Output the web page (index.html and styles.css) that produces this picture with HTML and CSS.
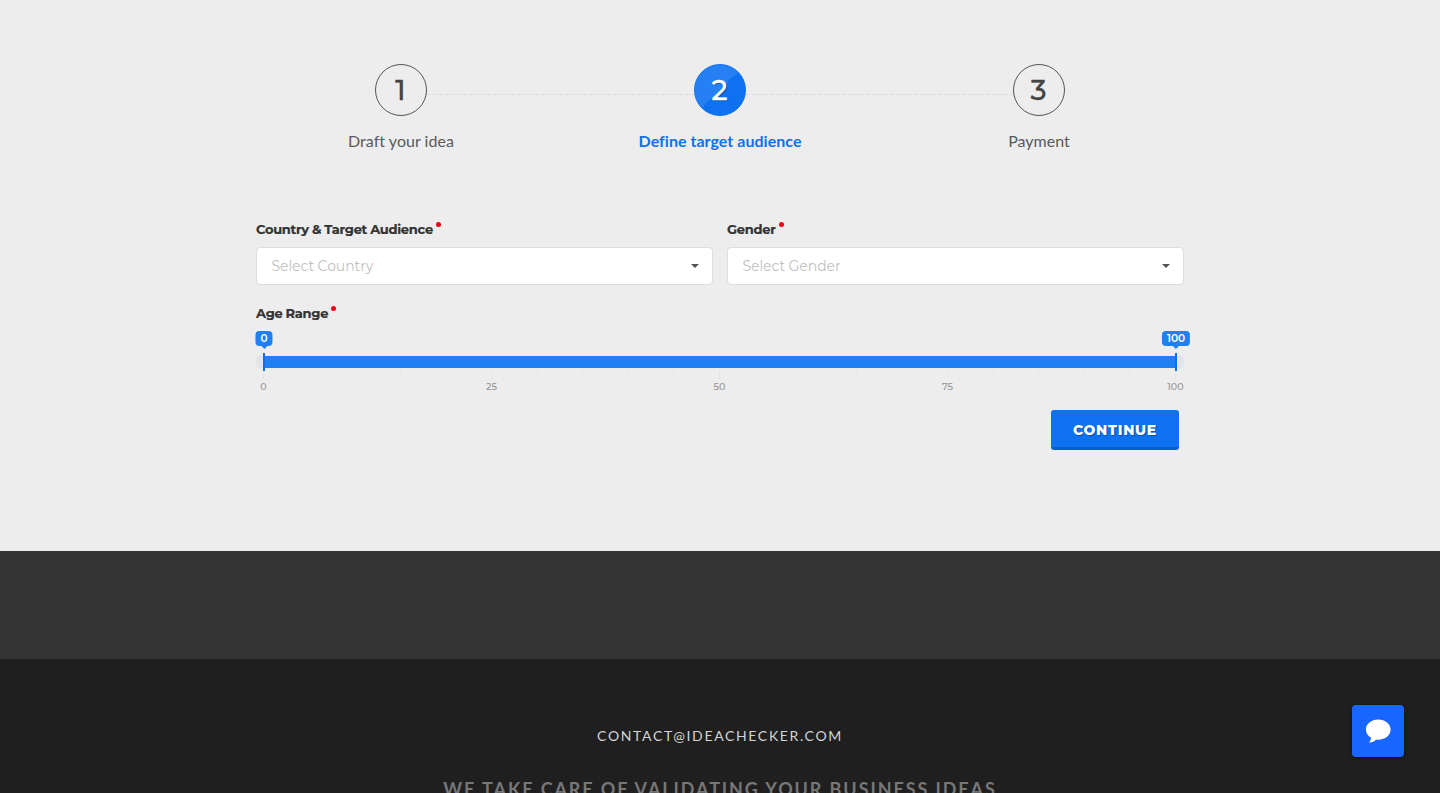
FILE: index.html
```html
<!DOCTYPE html>
<html lang="en">
<head>
  <meta charset="UTF-8" />
  <meta name="viewport" content="width=device-width, initial-scale=1.0"/>
  <title>Idea Checker - Define target audience</title>
  <link rel="stylesheet" href="styles.css">
</head>
<body>

  <main>
    <ol class="steps">
      <li class="step">
        <span class="circle">1</span>
        <span class="step-name">Draft your idea</span>
      </li>
      <li class="step active">
        <span class="circle">2</span>
        <span class="step-name">Define target audience</span>
      </li>
      <li class="step">
        <span class="circle">3</span>
        <span class="step-name">Payment</span>
      </li>
    </ol>

    <form class="audience">
      <div class="fields">
        <div class="field">
          <label class="label">Country &amp; Target Audience</label>
          <div class="dropdown">
            <span class="placeholder">Select Country</span>
            <i class="caret"></i>
          </div>
        </div>
        <div class="field">
          <label class="label">Gender</label>
          <div class="dropdown">
            <span class="placeholder">Select Gender</span>
            <i class="caret"></i>
          </div>
        </div>
      </div>

      <label class="label label-age">Age Range</label>
      <div class="range">
        <div class="bar">
          <div class="fill">
            <span class="handle from"><b class="tip">0</b></span>
            <span class="handle to"><b class="tip">100</b></span>
          </div>
        </div>
        <div class="grid" id="grid"></div>
      </div>

      <div class="actions">
        <button type="button" class="btn">CONTINUE</button>
      </div>
    </form>
  </main>

  <div class="band"></div>

  <footer>
    <a class="mail">CONTACT@IDEACHECKER.COM</a>
    <p class="slogan">WE TAKE CARE OF VALIDATING YOUR BUSINESS IDEAS</p>
  </footer>

  <div class="chat">
    <svg width="26" height="24" viewBox="0 0 26 24">
      <path fill="#fff" d="M13.200 .6C6.300 .6 .900 5 .900 10.600c0 3.500 2 6.400 5.200 8.200-.1 1.900-.7 3.200-2.100 4.700 3 .1 5.500-.9 7-3 .8.1 1.500.2 2.200.2 7 0 12.400-4.500 12.400-10.100S20.200.6 13.200.6z"/>
    </svg>
  </div>

<script>
  // ticks every 5 years, a label on every 25
  const grid = document.getElementById("grid");
  for (let i = 0; i <= 100; i += 5) {
    const tick = document.createElement("span");
    tick.className = "tick";
    if (i % 25 === 0) {
      tick.classList.add("big");
      tick.innerHTML = `<em>${i}</em>`;
    }
    grid.appendChild(tick);
  }
</script>

</body>
</html>
```
FILE: styles.css
```css
* {
  box-sizing: border-box;
}
body {
  margin: 0;
  height: 793px;
  overflow: hidden;
  background: #1f1f1f;
  font-family: Montserrat, Inter, sans-serif;
  color: #333;
}
main {
  height: 551px;
  padding-top: 64px;
  background: #ededed;
}

/* steps */
.steps {
  display: flex;
  width: 957px;
  margin: 0 auto;
  padding: 0;
  list-style: none;
}
.step {
  position: relative;
  flex: 1;
  display: flex;
  flex-direction: column;
  align-items: center;
  font-family: Lato, sans-serif;
}
.step + .step::before {
  content: "";
  position: absolute;
  top: 30px;
  right: calc(50% + 26px);
  width: 267px;
  height: 1px;
  background: repeating-linear-gradient(90deg, #dcdcdc 0 4px, transparent 4px 6px);
}
.circle {
  width: 52px;
  height: 52px;
  padding-right: 1px;
  border: 1px solid #555;
  border-radius: 50%;
  font: 500 28px/50px Montserrat, Inter, sans-serif;
  text-align: center;
  color: #444;
  -webkit-text-stroke: 0.3px;
}
.step-name {
  margin-top: 15px;
  font-size: 16px;
  line-height: 20px;
  letter-spacing: 0.03px;
  color: #5a5a5a;
}
.active .circle {
  border-color: #0d70ee;
  background: linear-gradient(135deg, #2581f3 50%, #0d71f0 50%);
  color: #fff;
  text-shadow: 1px 1px 1px rgba(0, 0, 0, 0.3);
}
.active .step-name {
  font-weight: 700;
  color: #0d71f0;
}

/* form */
.audience {
  width: 928px;
  margin: 70px auto 0;
}
.fields {
  display: grid;
  grid-template-columns: 457px 457px;
  gap: 14px;
}
.label {
  display: flex;
  gap: 3px;
  height: 16px;
  font-size: 13px;
  font-weight: 700;
  line-height: 16px;
  letter-spacing: -0.25px;
  word-spacing: -0.3px;
  -webkit-text-stroke: 0.2px;
}
.label::after {
  content: "";
  width: 5px;
  height: 5px;
  margin-top: 1px;
  border-radius: 50%;
  background: #f00014;
}
.dropdown {
  display: flex;
  align-items: center;
  justify-content: space-between;
  height: 38px;
  margin-top: 10px;
  padding: 0 13px 0 15px;
  border: 1px solid #dcdddd;
  border-radius: 4px;
  background: #fff;
}
.placeholder {
  margin-left: -0.5px;
  font-size: 14px;
  letter-spacing: -0.07px;
  color: #bfbfbf;
}
.caret {
  border: 4px solid transparent;
  border-top-color: #555;
  border-bottom: 0;
}
.label-age {
  margin-top: 20px;
}

/* range slider */
.range {
  padding-top: 35px;
}
.bar {
  height: 12px;
  padding: 0 8px;
  border-radius: 4px;
  background: #e1e4e9;
}
.fill {
  position: relative;
  height: 12px;
  background: #2080f2;
}
.handle {
  position: absolute;
  top: -3px;
  width: 2px;
  height: 18px;
  background: #0d6eee;
}
.from {
  left: -1px;
}
.to {
  right: -1px;
}
.tip {
  position: absolute;
  bottom: 25px;
  left: 50%;
  height: 15px;
  padding: 0 5px;
  border-radius: 4px;
  background: #2080f2;
  color: #fff;
  font-size: 10.5px;
  font-weight: 600;
  line-height: 15px;
  transform: translateX(-50%);
}
.tip::after {
  content: "";
  position: absolute;
  top: 15px;
  left: 50%;
  margin-left: -3px;
  border: 3px solid transparent;
  border-top-color: #2080f2;
  border-bottom: 0;
}
.grid {
  display: flex;
  justify-content: space-between;
  width: 913px;
  height: 24px;
  margin: 3px 0 0 7px;
}
.tick {
  display: flex;
  justify-content: center;
  width: 1px;
  height: 4px;
  background: #e1e4e9;
}
.big {
  height: 8px;
}
.tick em {
  padding-top: 10px;
  font-size: 9.5px;
  font-style: normal;
  font-weight: 500;
  line-height: 12px;
  color: #949494;
}
.actions {
  display: flex;
  justify-content: flex-end;
  margin: 15px 5px 0 0;
}
.btn {
  width: 128px;
  height: 40px;
  padding: 3px 0 0;
  border: none;
  border-bottom: 3px solid #0a5fca;
  border-radius: 3px;
  background: #0d71f0;
  color: #fff;
  font: 800 14px/34px Montserrat, Inter, sans-serif;
  letter-spacing: 0.7px;
  text-shadow: 1px 1px 1px rgba(0, 0, 0, 0.3);
}

/* bottom */
.band {
  height: 108px;
  background: #333;
}
footer {
  height: 134px;
  padding-top: 67px;
  overflow: hidden;
  background: #1f1f1f;
  text-align: center;
  font-family: Lato, sans-serif;
}
.mail {
  display: block;
  font-size: 14px;
  line-height: 20px;
  letter-spacing: 1.65px;
  color: #d4d4d4;
}
.slogan {
  margin: 31px 0 0;
  font-size: 18px;
  font-weight: 700;
  line-height: 24px;
  letter-spacing: 1.9px;
  color: #777;
}
.chat {
  position: fixed;
  top: 705px;
  right: 36px;
  display: flex;
  align-items: center;
  justify-content: center;
  width: 52px;
  height: 52px;
  border-radius: 4px;
  background: #1866ff;
  box-shadow: 0 1px 4px rgba(0, 0, 0, 0.5);
}
```
